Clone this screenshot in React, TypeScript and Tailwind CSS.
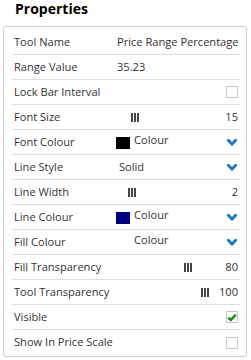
import React from "react";

const Chevron = () => (
  <svg width="10" height="7" viewBox="0 0 10 7" className="block">
    <path d="M1.3 1.3 L5 5 L8.7 1.3" fill="none" stroke="#1f78c1" strokeWidth="3" strokeLinecap="square" strokeLinejoin="miter" />
  </svg>
);

const Thumb = () => (
  <div className="flex gap-[1px] h-[9px]">
    <div className="w-[2px] h-full bg-[#444]" />
    <div className="w-[2px] h-full bg-[#444]" />
    <div className="w-[2px] h-full bg-[#444]" />
  </div>
);

const Checkbox = ({ checked }: { checked?: boolean }) => (
  <div className="w-[12px] h-[12px] border border-[#c8c8c8] bg-white flex items-center justify-center">
    {checked && (
      <svg width="10" height="9" viewBox="0 0 10 9" className="block">
        <path d="M1.2 4.6 L3.8 7 L8.8 1.6" fill="none" stroke="#17891a" strokeWidth="2.4" />
      </svg>
    )}
  </div>
);

type Row = {
  label: string;
  kind: "text" | "check" | "slider" | "colour" | "select";
  value?: string;
  checked?: boolean;
  thumb?: number;
  swatch?: string;
};

const rows: Row[] = [
  { label: "Tool Name", kind: "text", value: "Price Range Percentage" },
  { label: "Range Value", kind: "text", value: "35.23" },
  { label: "Lock Bar Interval", kind: "check" },
  { label: "Font Size", kind: "slider", value: "15", thumb: 131 },
  { label: "Font Colour", kind: "colour", swatch: "#000000" },
  { label: "Line Style", kind: "select", value: "Solid" },
  { label: "Line Width", kind: "slider", value: "2", thumb: 128 },
  { label: "Line Colour", kind: "colour", swatch: "#000080" },
  { label: "Fill Colour", kind: "colour" },
  { label: "Fill Transparency", kind: "slider", value: "80", thumb: 184 },
  { label: "Tool Transparency", kind: "slider", value: "100", thumb: 201 },
  { label: "Visible", kind: "check", checked: true },
  { label: "Show In Price Scale", kind: "check" },
];

export default function App() {
  return (
    <div
      className="w-[251px] h-[360px] bg-white text-[#333] overflow-hidden"
      style={{ fontFamily: '"Open Sans", "Liberation Sans", sans-serif' }}
    >
      <div className="pl-[15px] text-[14px] leading-[18px] font-bold text-black">Properties</div>
      <div className="mt-[8px] ml-[3px] w-[244px] border border-[#cccccc] rounded-[3px] pl-[8px] pr-[6px] pt-[3px] pb-[1px]">
        {rows.map((r, i) => (
          <div
            key={r.label}
            className={
              "h-[25px] flex items-center text-[11.1px] pl-[2px] pr-[2px] " +
              (i < rows.length - 1 ? "border-b border-[#dddddd]" : "")
            }
          >
            <div className="w-[103px] shrink-0 whitespace-nowrap">{r.label}</div>
            <div className="flex-1 flex items-center h-full relative whitespace-nowrap">
              {r.kind === "text" && <span>{r.value}</span>}
              {r.kind === "check" && (
                <div className="ml-auto">
                  <Checkbox checked={r.checked} />
                </div>
              )}
              {r.kind === "slider" && (
                <>
                  <div className="absolute top-[8px]" style={{ left: (r.thumb ?? 0) - 117 }}>
                    <Thumb />
                  </div>
                  <span className="ml-auto">{r.value}</span>
                </>
              )}
              {r.kind === "colour" && (
                <>
                  <div className="w-[14px] h-[12px] -ml-[1px] mr-[4px] mt-[1px]" style={{ background: r.swatch ?? "transparent" }} />
                  <span className="-mt-[3px]">Colour</span>
                  <div className="ml-auto mr-[1px]">
                    <Chevron />
                  </div>
                </>
              )}
              {r.kind === "select" && (
                <>
                  <span className="ml-[2px]">{r.value}</span>
                  <div className="ml-auto mr-[1px]">
                    <Chevron />
                  </div>
                </>
              )}
            </div>
          </div>
        ))}
      </div>
    </div>
  );
}
